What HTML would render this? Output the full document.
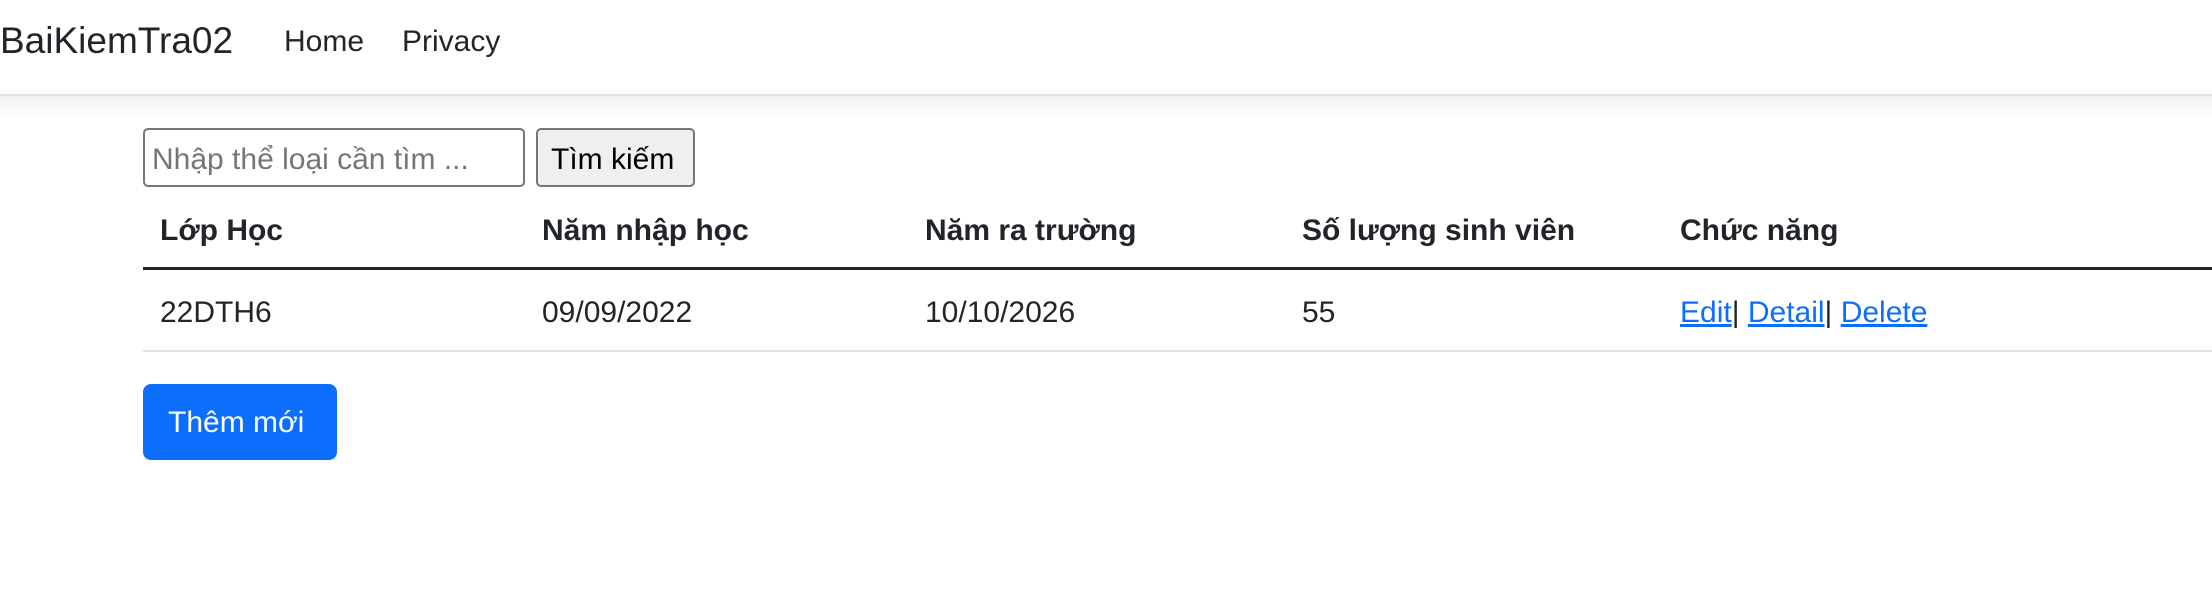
<!DOCTYPE html>
<html><head><meta charset="utf-8">
<style>
html,body{margin:0;padding:0;width:2212px;height:597px;overflow:hidden;background:#fff;}
body{font-family:"Liberation Sans",sans-serif;color:#212529;position:relative;}
.abs{position:absolute;white-space:nowrap;}
.nav{position:absolute;left:0;top:0;width:2212px;height:94px;border-bottom:2px solid #dee2e6;}
.shadow{position:absolute;left:0;top:96px;width:2212px;height:22px;background:linear-gradient(#f2f2f2,#fff);}
.brand{font-size:37px;left:0;top:20px;}
.nl{font-size:30px;top:25px;}
.input{left:143px;top:128px;width:378px;height:55px;border:2px solid #767676;border-radius:5px;}
.ph{font-size:30px;color:#757575;left:152px;top:143px;}
.btn{left:536px;top:128px;width:155px;height:55px;border:2px solid #767676;border-radius:5px;background:#efefef;}
.btxt{font-size:30px;color:#000;left:551px;top:143px;}
.th{font-size:30px;font-weight:bold;top:214px;}
.td{font-size:30px;top:296px;}
.line1{left:143px;top:267px;width:2069px;height:3px;background:#212529;}
.line2{left:143px;top:350px;width:2069px;height:2px;background:#dee2e6;}
a{color:#0d6efd;text-decoration:underline;}
.add{left:143px;top:384px;width:194px;height:76px;background:#0d6efd;border-radius:8px;}
.addt{font-size:30px;color:#fff;left:168px;top:406px;}
</style></head><body>
<div class="nav"></div>
<div class="shadow"></div>
<div class="abs brand">BaiKiemTra02</div>
<div class="abs nl" style="left:284px">Home</div>
<div class="abs nl" style="left:402px">Privacy</div>

<div class="abs input"></div>
<div class="abs ph">Nhập thể loại cần tìm ...</div>
<div class="abs btn"></div>
<div class="abs btxt">Tìm kiếm</div>

<div class="abs th" style="left:160px">Lớp Học</div>
<div class="abs th" style="left:542px">Năm nhập học</div>
<div class="abs th" style="left:925px">Năm ra trường</div>
<div class="abs th" style="left:1302px">Số lượng sinh viên</div>
<div class="abs th" style="left:1680px">Chức năng</div>
<div class="abs line1"></div>

<div class="abs td" style="left:160px">22DTH6</div>
<div class="abs td" style="left:542px">09/09/2022</div>
<div class="abs td" style="left:925px">10/10/2026</div>
<div class="abs td" style="left:1302px">55</div>
<div class="abs td" style="left:1680px"><a>Edit</a>| <a>Detail</a>| <a>Delete</a></div>
<div class="abs line2"></div>

<div class="abs add"></div>
<div class="abs addt">Thêm mới</div>
</body></html>
